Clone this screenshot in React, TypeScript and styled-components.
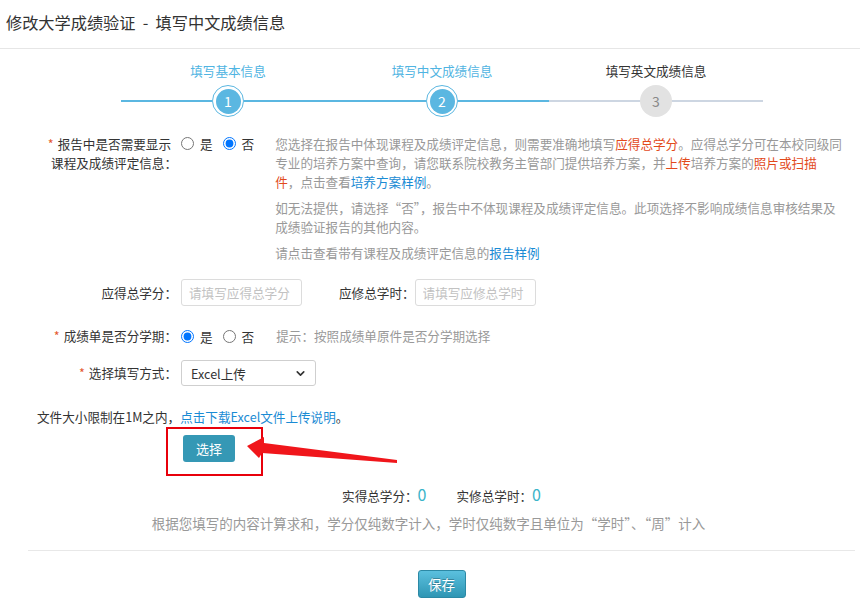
import React from 'react';
import styled, { createGlobalStyle } from 'styled-components';
import { ChevronDown } from 'lucide-react';

const GlobalStyle = createGlobalStyle`
  body {
    margin: 0;
    background: #fff;
    font-family: "Noto Sans CJK SC", "Noto Sans", sans-serif;
    font-size: 12.6px;
    color: #333;
  }
`;

const Page = styled.div`
  width: 860px;
  height: 603px;
  overflow: hidden;
`;

const Header = styled.div`
  height: 49px;
  box-sizing: border-box;
  border-bottom: 1px solid #e6e6e6;
  display: flex;
  align-items: center;
  padding: 0 0 4px 6px;
  font-size: 16.2px;
  color: #333;
  white-space: pre;
`;

const Steps = styled.div`
  display: flex;
  padding-left: 121px;
  margin-top: 12px;
`;

const Step = styled.div`
  width: 214px;
  display: flex;
  flex-direction: column;
  align-items: center;
`;

const StepLabel = styled.div<{ $active: boolean }>`
  line-height: 20px;
  margin-bottom: 4px;
  color: ${p => (p.$active ? '#4fb4e2' : '#333')};
`;

const Track = styled.div`
  width: 100%;
  height: 32px;
  display: flex;
  align-items: center;
`;

const Segment = styled.div<{ $active: boolean }>`
  flex: 1;
  height: 2px;
  background: ${p => (p.$active ? '#5bb7e1' : '#cdd6e2')};
`;

const Circle = styled.div<{ $active: boolean }>`
  width: 32px;
  height: 32px;
  box-sizing: border-box;
  border-radius: 50%;
  display: flex;
  align-items: center;
  justify-content: center;
  border: ${p => (p.$active ? '1px solid #5bb7e1' : 'none')};
  background: ${p => (p.$active ? '#fff' : '#e2e2e2')};
  color: ${p => (p.$active ? '#fff' : '#888')};
  font-size: 14px;
`;

const CircleInner = styled.div`
  width: 25px;
  height: 25px;
  border-radius: 50%;
  background: #5bb7e1;
  display: flex;
  align-items: center;
  justify-content: center;
`;

const Form = styled.div`
  margin-top: 17px;
`;

const Row = styled.div<{ $mt: number }>`
  display: flex;
  align-items: flex-start;
  margin-top: ${p => p.$mt}px;
`;

const Label = styled.div<{ $lh: number }>`
  width: 130px;
  flex-shrink: 0;
  margin: 0 4px 0 47px;
  text-align: right;
  line-height: ${p => p.$lh}px;
  color: #333;
`;

const LabelLine = styled.span`
  white-space: nowrap;
  margin-right: 6px;
`;

const Star = styled.span`
  color: #e4572e;
  margin-right: 4px;
`;

const RadioGroup = styled.div<{ $lh: number }>`
  display: flex;
  align-items: center;
  height: ${p => p.$lh}px;
  gap: 10px;
  flex-shrink: 0;
`;

const RadioOption = styled.label`
  display: flex;
  align-items: center;
  gap: 6px;
  color: #333;
`;

const RadioInput = styled.input`
  width: 13px;
  height: 13px;
  margin: 0;
`;

const Description = styled.div`
  width: 572px;
  margin-left: 21px;
  color: #999;
  line-height: 19px;
`;

const Para = styled.p`
  margin: 0 0 7px;
  &:last-child {
    margin-bottom: 0;
  }
`;

const Hot = styled.span`
  color: #e24a1c;
`;

const Link = styled.a`
  color: #1a8bd4;
  text-decoration: none;
`;

const Quote = styled.span`
  font-feature-settings: "fwid";
`;

const InlineLabel = styled.div`
  margin-left: 37px;
  line-height: 27px;
`;

const TextInput = styled.input`
  width: 121px;
  height: 27px;
  box-sizing: border-box;
  border: 1px solid #dcdcdc;
  border-radius: 3px;
  padding: 0 7px;
  font: inherit;
  outline: none;
  &::placeholder {
    color: #c2c2c2;
  }
`;

const Hint = styled.div`
  margin-left: 22px;
  color: #999;
  line-height: 20px;
`;

const SelectBox = styled.div`
  width: 135px;
  height: 26px;
  box-sizing: border-box;
  border: 1px solid #cfcfcf;
  border-radius: 3px;
  padding: 0 8px 0 9px;
  display: flex;
  align-items: center;
  justify-content: space-between;
  color: #333;
`;

const UploadNote = styled.div`
  margin-top: 21px;
  padding-left: 37px;
  line-height: 20px;
  color: #333;
`;

const HighlightRow = styled.div`
  position: relative;
  padding-left: 166px;
`;

const HighlightBox = styled.div`
  width: 97px;
  height: 49px;
  box-sizing: border-box;
  border: 2px solid #e8000b;
  padding: 6px 0 0 15px;
`;

const PickButton = styled.button`
  width: 52px;
  height: 27px;
  border: none;
  border-radius: 3px;
  background: #3598b5;
  color: #fff;
  font: inherit;
  font-size: 13px;
  padding: 0;
`;

const Arrow = styled.svg`
  position: absolute;
  left: 240px;
  top: 2px;
`;

const Bottom = styled.div`
  margin: 0 5px 0 28px;
`;

const Stats = styled.div`
  margin-top: 8px;
  display: flex;
  justify-content: center;
  align-items: baseline;
  gap: 30px;
  line-height: 20px;
`;

const Stat = styled.div`
  color: #333;
`;

const Num = styled.span`
  color: #3bb4c9;
  font-size: 16px;
`;

const Tip = styled.div`
  margin-top: 7px;
  padding-right: 26px;
  text-align: center;
  color: #999;
  font-size: 13.5px;
  line-height: 20px;
`;

const Divider = styled.div`
  margin-top: 17px;
  border-top: 1px solid #e8e8e8;
`;

const SaveRow = styled.div`
  display: flex;
  justify-content: center;
  margin-top: 19px;
`;

const SaveButton = styled.button`
  width: 48px;
  height: 28px;
  border: 1px solid #2c89a5;
  border-radius: 3px;
  background: linear-gradient(#5bc0de, #2f96b4);
  color: #fff;
  font: inherit;
  font-size: 13.5px;
  padding: 0;
  text-shadow: 0 -1px 0 rgba(0, 0, 0, 0.25);
`;

const steps = [
  { label: '填写基本信息', active: true, lineActive: true },
  { label: '填写中文成绩信息', active: true, lineActive: true },
  { label: '填写英文成绩信息', active: false, lineActive: false },
];

const App = () => {
  return (
    <Page>
      <GlobalStyle />
      <Header>修改大学成绩验证  -  填写中文成绩信息</Header>

      <Steps>
        {steps.map((s, i) => (
          <Step key={s.label}>
            <StepLabel $active={s.active}>{s.label}</StepLabel>
            <Track>
              <Segment $active={s.lineActive} />
              <Circle $active={s.active}>
                {s.active ? <CircleInner>{i + 1}</CircleInner> : i + 1}
              </Circle>
              <Segment $active={s.lineActive} />
            </Track>
          </Step>
        ))}
      </Steps>

      <Form>
        <Row $mt={0}>
          <Label $lh={19}>
            <LabelLine>
              <Star>*</Star>报告中是否需要显示
            </LabelLine>
            <br />
            课程及成绩评定信息：
          </Label>
          <RadioGroup $lh={19}>
            <RadioOption>
              <RadioInput type="radio" name="show" />是
            </RadioOption>
            <RadioOption>
              <RadioInput type="radio" name="show" defaultChecked />否
            </RadioOption>
          </RadioGroup>
          <Description>
            <Para>
              您选择在报告中体现课程及成绩评定信息，则需要准确地填写<Hot>应得总学分</Hot>。应得总学分可在本校同级同专业的培养方案中查询，请您联系院校教务主管部门提供培养方案，并<Hot>上传</Hot>培养方案的<Hot>照片或扫描<br />件</Hot>，点击查看<Link>培养方案样例</Link>。
            </Para>
            <Para>
              如无法提供，请选择<Quote>“</Quote>否<Quote>”</Quote>，报告中不体现课程及成绩评定信息。此项选择不影响成绩信息审核结果及成绩验证报告的其他内容。
            </Para>
            <Para>
              请点击查看带有课程及成绩评定信息的<Link>报告样例</Link>
            </Para>
          </Description>
        </Row>

        <Row $mt={17}>
          <Label $lh={27}>应得总学分：</Label>
          <TextInput placeholder="请填写应得总学分" />
          <InlineLabel>应修总学时：</InlineLabel>
          <TextInput placeholder="请填写应修总学时" />
        </Row>

        <Row $mt={20}>
          <Label $lh={20}>
            <Star>*</Star>成绩单是否分学期：
          </Label>
          <RadioGroup $lh={20}>
            <RadioOption>
              <RadioInput type="radio" name="term" defaultChecked />是
            </RadioOption>
            <RadioOption>
              <RadioInput type="radio" name="term" />否
            </RadioOption>
          </RadioGroup>
          <Hint>提示：按照成绩单原件是否分学期选择</Hint>
        </Row>

        <Row $mt={14}>
          <Label $lh={26}>
            <Star>*</Star>选择填写方式：
          </Label>
          <SelectBox>
            Excel上传
            <ChevronDown size={13} strokeWidth={3} color="#333" />
          </SelectBox>
        </Row>
      </Form>

      <UploadNote>
        文件大小限制在1M之内，<Link>点击下载Excel文件上传说明</Link>。
      </UploadNote>

      <HighlightRow>
        <HighlightBox>
          <PickButton>选择</PickButton>
        </HighlightBox>
        <Arrow width="165" height="40" viewBox="240 430 165 40">
          <polygon
            points="247,447 264,438 264,444 397,461 397,464 262,454 259,459"
            fill="#f0161b"
          />
        </Arrow>
      </HighlightRow>

      <Bottom>
        <Stats>
          <Stat>
            实得总学分：<Num>0</Num>
          </Stat>
          <Stat>
            实修总学时：<Num>0</Num>
          </Stat>
        </Stats>
        <Tip>
          根据您填写的内容计算求和，学分仅纯数字计入，学时仅纯数字且单位为<Quote>“</Quote>学时<Quote>”</Quote>、<Quote>“</Quote>周<Quote>”</Quote>计入
        </Tip>
        <Divider />
        <SaveRow>
          <SaveButton>保存</SaveButton>
        </SaveRow>
      </Bottom>
    </Page>
  );
};

export default App;
